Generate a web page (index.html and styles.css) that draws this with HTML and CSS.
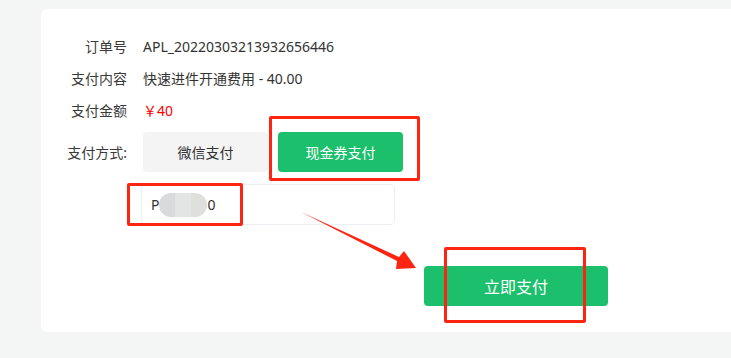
FILE: index.html
```html
<!DOCTYPE html>
<html lang="zh-CN">
<head>
    <meta charset="UTF-8">
    <meta name="viewport" content="width=device-width, initial-scale=1.0">
    <title>支付</title>
    <link rel="stylesheet" href="styles.css">
</head>
<body>
    <div class="card">
        <div class="info-row">
            <span class="label">订单号</span>
            <span class="value">APL_20220303213932656446</span>
        </div>
        <div class="info-row">
            <span class="label">支付内容</span>
            <span class="value">快速进件开通费用 - 40.00</span>
        </div>
        <div class="info-row">
            <span class="label">支付金额</span>
            <span class="value price">￥40</span>
        </div>
        <div class="info-row method-row">
            <span class="label">支付方式:</span>
            <div class="methods">
                <button type="button" class="method-btn">微信支付</button>
                <button type="button" class="method-btn active">现金券支付</button>
            </div>
        </div>
        <div class="coupon-row">
            <div class="coupon-input">
                <span>P</span><span class="blur"></span><span>0</span>
            </div>
        </div>
        <div class="pay-row">
            <button type="button" class="pay-btn">立即支付</button>
        </div>

        <!-- annotations drawn over the page -->
        <div class="mark mark-method"></div>
        <div class="mark mark-input"></div>
        <div class="mark mark-pay"></div>
        <svg class="arrow" width="731" height="358" viewBox="0 0 731 358">
            <polygon points="301,212 399,257 404,251 416,268 396,269 397,261" fill="#fe2412"/>
        </svg>
    </div>
</body>
</html>
```

FILE: styles.css
```css
* {
    margin: 0;
    padding: 0;
    box-sizing: border-box;
}

body {
    font-family: "Noto Sans", "Noto Sans CJK SC", sans-serif;
    background: #f4f5f5;
    height: 358px;
    overflow: hidden;
    padding: 9px 0 0 41px;
}

.card {
    background: #fff;
    border-radius: 6px 0 0 6px;
    height: 323px;
    padding-top: 21px;
    font-size: 14px;
    color: #333;
}

.info-row {
    display: flex;
    align-items: center;
    height: 32px;
}

.label {
    width: 86px;
    text-align: right;
    margin-right: 16px;
    color: #3a3a3a;
}

.value {
    color: #333;
}

.price {
    color: #f00;
}

.method-row {
    height: 40px;
    margin-top: 6px;
}

.methods {
    display: flex;
    gap: 10px;
}

.method-btn {
    width: 125px;
    height: 40px;
    border: none;
    border-radius: 4px;
    background: #f4f4f5;
    color: #333;
    font-family: inherit;
    font-size: 14px;
}

.method-btn.active {
    background: #1bbf6c;
    color: #fff;
}

.coupon-row {
    margin-top: 12px;
    padding-left: 100px;
}

.coupon-input {
    width: 254px;
    height: 41px;
    border: 1px solid #ebeef2;
    border-radius: 4px;
    display: flex;
    align-items: center;
    padding-left: 9px;
    font-size: 14px;
    color: #333;
}

.blur {
    width: 48px;
    height: 24px;
    border-radius: 12px;
    background: linear-gradient(to right, #d9dadc 0 33%, #e3e4e4 33% 66%, #dfe0dc 66%);
}

.pay-row {
    margin-top: 41px;
    padding-left: 383px;
}

.pay-btn {
    width: 184px;
    height: 40px;
    border: none;
    border-radius: 4px;
    background: #1bbf6c;
    color: #fff;
    font-family: inherit;
    font-size: 16px;
}

.mark {
    position: absolute;
    border: 3px solid #fe2412;
    border-radius: 2px;
}

.mark-method {
    left: 269px;
    top: 116px;
    width: 151px;
    height: 65px;
}

.mark-input {
    left: 127px;
    top: 183px;
    width: 116px;
    height: 43px;
}

.mark-pay {
    left: 444px;
    top: 247px;
    width: 142px;
    height: 76px;
}

.arrow {
    position: absolute;
    left: 0;
    top: 0;
}
```
